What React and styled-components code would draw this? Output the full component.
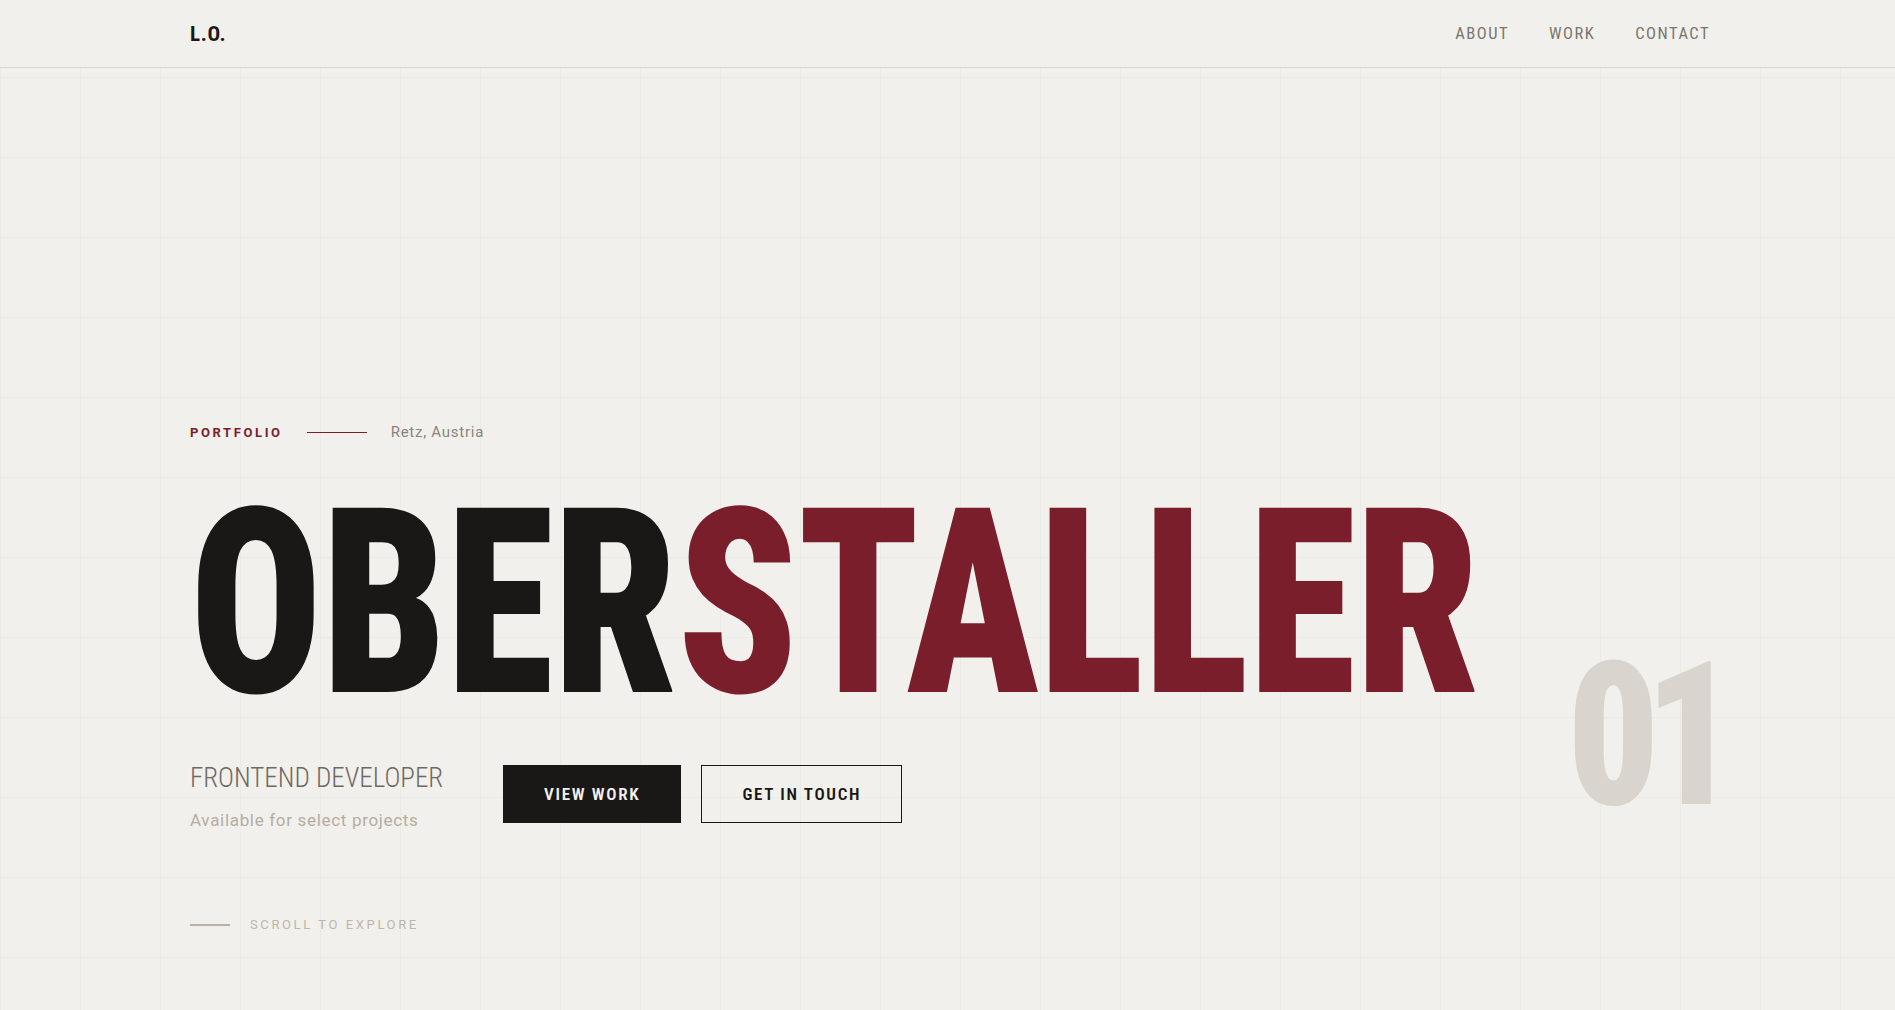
import React from "react";
import styled, { createGlobalStyle } from "styled-components";

const GlobalStyle = createGlobalStyle`
  html, body { margin: 0; padding: 0; }
  body {
    min-height: 100vh;
    background-color: #f2f0ec;
    background-image:
      linear-gradient(to right, rgba(70, 60, 50, 0.035) 1px, transparent 1px),
      linear-gradient(to bottom, rgba(70, 60, 50, 0.035) 1px, transparent 1px);
    background-size: 80px 80px;
    background-position: 0 -3px;
    font-family: Roboto, "Liberation Sans", sans-serif;
    color: #1a1816;
  }
`;

const Container = styled.div`
  position: relative;
  margin: 0 185px 0 190px;
`;

const Header = styled.header`
  height: 67px;
  border-bottom: 1px solid #d9d5cf;
  background: #f2f0ec;
`;
const HeaderInner = styled(Container)`
  height: 100%;
  display: flex;
  align-items: center;
  justify-content: space-between;
`;
const Logo = styled.div`
  font-stretch: 75%;
  font-weight: 700;
  font-size: 21px;
  letter-spacing: 0.03em;
`;
const Nav = styled.nav`
  display: flex;
  gap: 40px;
`;
const NavLink = styled.a`
  font-size: 16.5px;
  font-stretch: 87.5%;
  letter-spacing: 0.09em;
  color: #7a756e;
  text-decoration: none;
`;

const Hero = styled(Container)`
  padding-top: 355px;
`;
const Eyebrow = styled.div`
  display: flex;
  align-items: center;
  gap: 24px;
  height: 18px;
`;
const Label = styled.span`
  font-size: 13px;
  font-weight: 700;
  letter-spacing: 0.2em;
  color: #7a1e2b;
`;
const Rule = styled.span`
  width: 60px;
  height: 1px;
  background: #7a1e2b;
`;
const Place = styled.span`
  font-size: 15px;
  letter-spacing: 0.05em;
  color: #8a847c;
`;
const Title = styled.h1`
  margin: 46px 0 0;
  font-stretch: 75%;
  font-weight: 900;
  font-size: 259px;
  line-height: 0.9;
  white-space: nowrap;
  color: #1a1816;
  transform: scaleX(0.845);
  transform-origin: left center;
`;
const Accent = styled.span`
  color: #7a1e2b;
`;
const Row = styled.div`
  display: flex;
  align-items: flex-start;
  gap: 60px;
  margin-top: 42px;
`;
const Intro = styled.div`
  width: 253px;
  white-space: nowrap;
`;
const Role = styled.div`
  font-stretch: 75%;
  font-size: 27px;
  font-weight: 300;
  color: #6e6962;
`;
const Note = styled.div`
  margin-top: 16px;
  font-size: 17px;
  letter-spacing: 0.04em;
  color: #b5ada3;
`;
const Buttons = styled.div`
  display: flex;
  gap: 20px;
  margin-top: 3px;
`;
const Button = styled.a`
  display: flex;
  align-items: center;
  height: 58px;
  padding: 0 40px;
  box-sizing: border-box;
  font-stretch: 75%;
  font-size: 17px;
  font-weight: 600;
  letter-spacing: 0.1em;
  text-decoration: none;
  border: 1px solid #1a1816;
  background: ${(p) => (p.$solid ? "#1a1816" : "transparent")};
  color: ${(p) => (p.$solid ? "#f2f0ec" : "#1a1816")};
`;
const Counter = styled.div`
  position: absolute;
  right: -12px;
  top: 568px;
  font-stretch: 75%;
  font-weight: 900;
  font-size: 200px;
  line-height: 1;
  letter-spacing: -0.08em;
  color: #d9d5ce;
  transform: scaleX(0.9);
  transform-origin: right top;
`;
const Scroll = styled.div`
  display: flex;
  align-items: center;
  gap: 20px;
  margin-top: 87px;
`;
const ScrollLine = styled.span`
  width: 40px;
  height: 2px;
  background: #b8b0a6;
`;
const ScrollText = styled.span`
  font-size: 13px;
  letter-spacing: 0.2em;
  color: #bdb5ab;
`;

const App = () => {
  return (
    <>
      <GlobalStyle />
      <Header>
        <HeaderInner>
          <Logo>L.O.</Logo>
          <Nav>
            <NavLink href="#about">ABOUT</NavLink>
            <NavLink href="#work">WORK</NavLink>
            <NavLink href="#contact">CONTACT</NavLink>
          </Nav>
        </HeaderInner>
      </Header>
      <Hero as="section">
        <Counter>01</Counter>
        <Eyebrow>
          <Label>PORTFOLIO</Label>
          <Rule />
          <Place>Retz, Austria</Place>
        </Eyebrow>
        <Title>
          OBER<Accent>STALLER</Accent>
        </Title>
        <Row>
          <Intro>
            <Role>FRONTEND DEVELOPER</Role>
            <Note>Available for select projects</Note>
          </Intro>
          <Buttons>
            <Button href="#work" $solid>VIEW WORK</Button>
            <Button href="#contact">GET IN TOUCH</Button>
          </Buttons>
        </Row>
        <Scroll>
          <ScrollLine />
          <ScrollText>SCROLL TO EXPLORE</ScrollText>
        </Scroll>
      </Hero>
    </>
  );
};

export default App;
